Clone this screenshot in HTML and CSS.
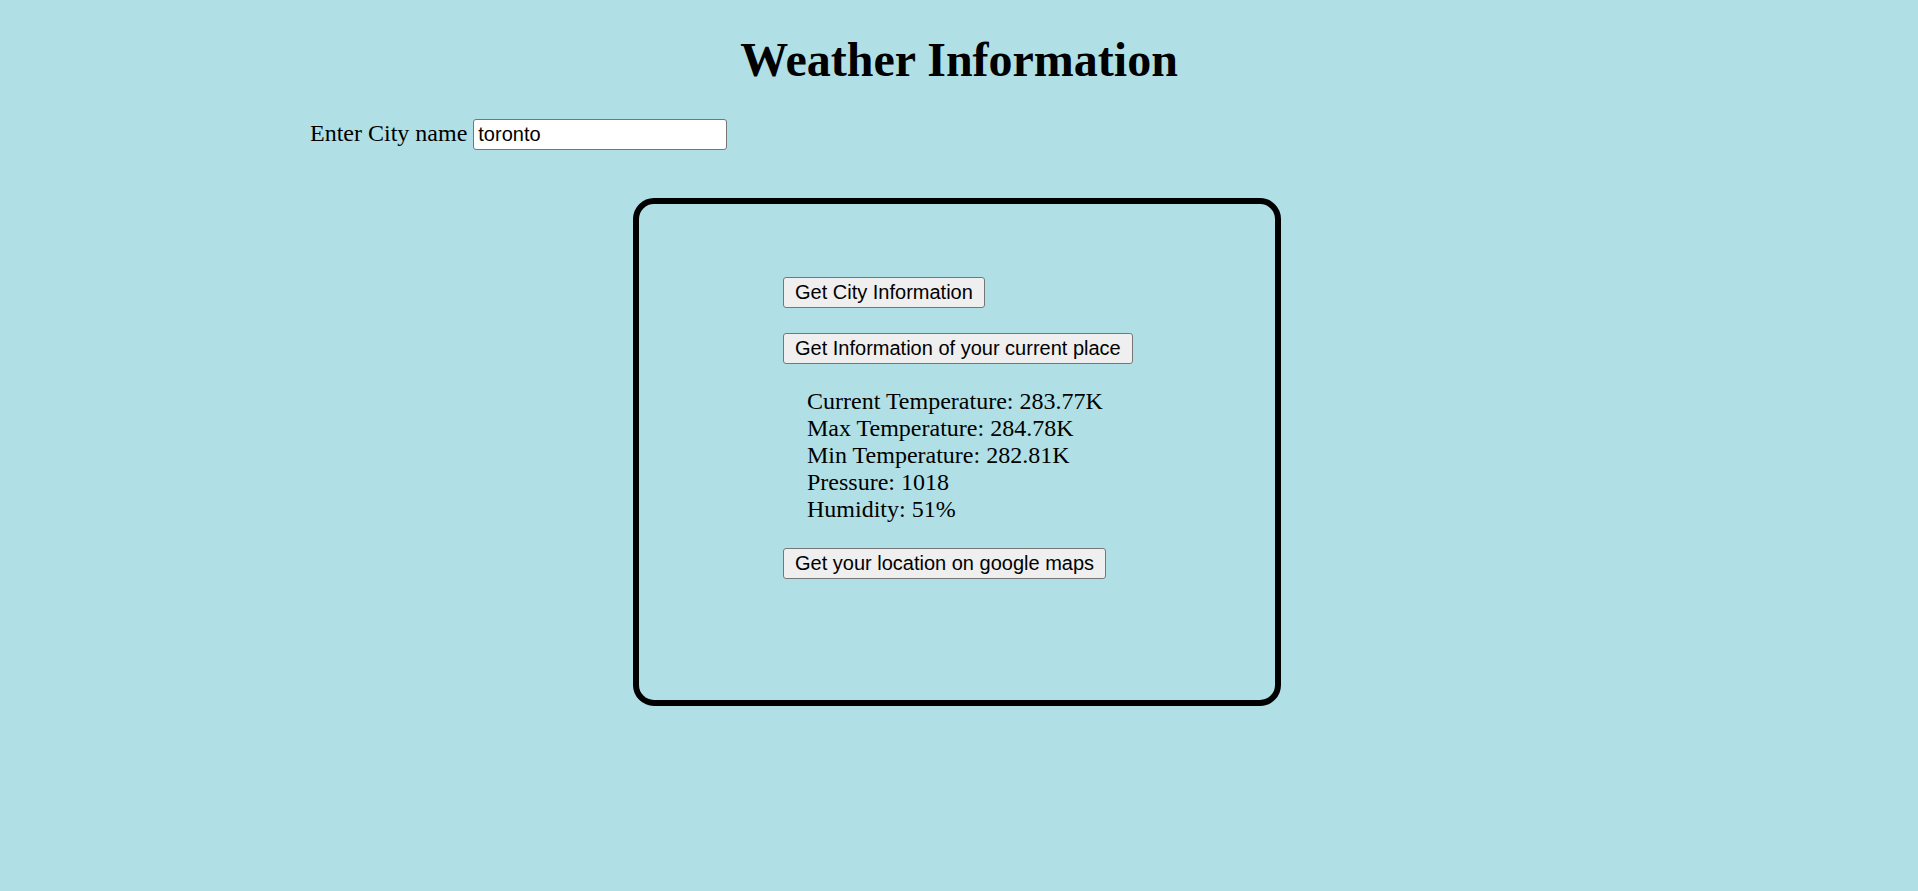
FILE: index.html
```html
<!DOCTYPE html>
<html lang="en">
<head>
<meta charset="utf-8">
<title>Weather Information</title>
<link rel="stylesheet" href="styles.css">
</head>
<body>
  <h1 class="title">Weather Information</h1>
  <div class="city-row">
    <label class="city-label" for="city">Enter City name</label>
    <input class="city-input" id="city" type="text" value="toronto">
  </div>
  <div class="card">
    <button class="btn" type="button">Get City Information</button>
    <button class="btn" type="button">Get Information of your current place</button>
    <div class="data">
      <div class="data-line">Current Temperature: 283.77K</div>
      <div class="data-line">Max Temperature: 284.78K</div>
      <div class="data-line">Min Temperature: 282.81K</div>
      <div class="data-line">Pressure: 1018</div>
      <div class="data-line">Humidity: 51%</div>
    </div>
    <button class="btn btn-map" type="button">Get your location on google maps</button>
  </div>
</body>
</html>
```

FILE: styles.css
```css
html {
  background: #b0e0e6;
}

body {
  margin: 0;
  padding: 12px;
  background: #b0e0e6;
  font-family: "Liberation Serif", "Times New Roman", serif;
  font-size: 24px;
  color: #000;
}

.title {
  margin: 21px 0 33px;
  font-size: 48px;
  font-weight: bold;
  line-height: 53px;
  text-align: center;
}

.city-row {
  padding-left: 298px;
}

.city-label {
  font-size: 24px;
}

.city-input {
  box-sizing: border-box;
  width: 254px;
  height: 31px;
  padding: 1px 4px;
  border: 1px solid #767676;
  border-radius: 3px;
  background: #fff;
  font-family: "Liberation Sans", Arial, sans-serif;
  font-size: 20px;
  color: #000;
  vertical-align: baseline;
}

.card {
  box-sizing: border-box;
  width: 648px;
  height: 508px;
  margin: 48px 0 0 621px;
  padding: 73px 0 0 144px;
  border: 6px solid #000;
  border-radius: 21px;
  display: flex;
  flex-direction: column;
  align-items: flex-start;
}

.btn {
  box-sizing: border-box;
  height: 31px;
  padding: 0 11px;
  border: 1px solid #767676;
  border-radius: 3px;
  background: #efefef;
  font-family: "Liberation Sans", Arial, sans-serif;
  font-size: 20px;
  line-height: 23px;
  color: #000;
}

.btn + .btn {
  margin-top: 25px;
}

.data {
  margin-top: 24px;
  padding-left: 24px;
  line-height: 27px;
}

.btn-map {
  margin-top: 25px;
}
```
